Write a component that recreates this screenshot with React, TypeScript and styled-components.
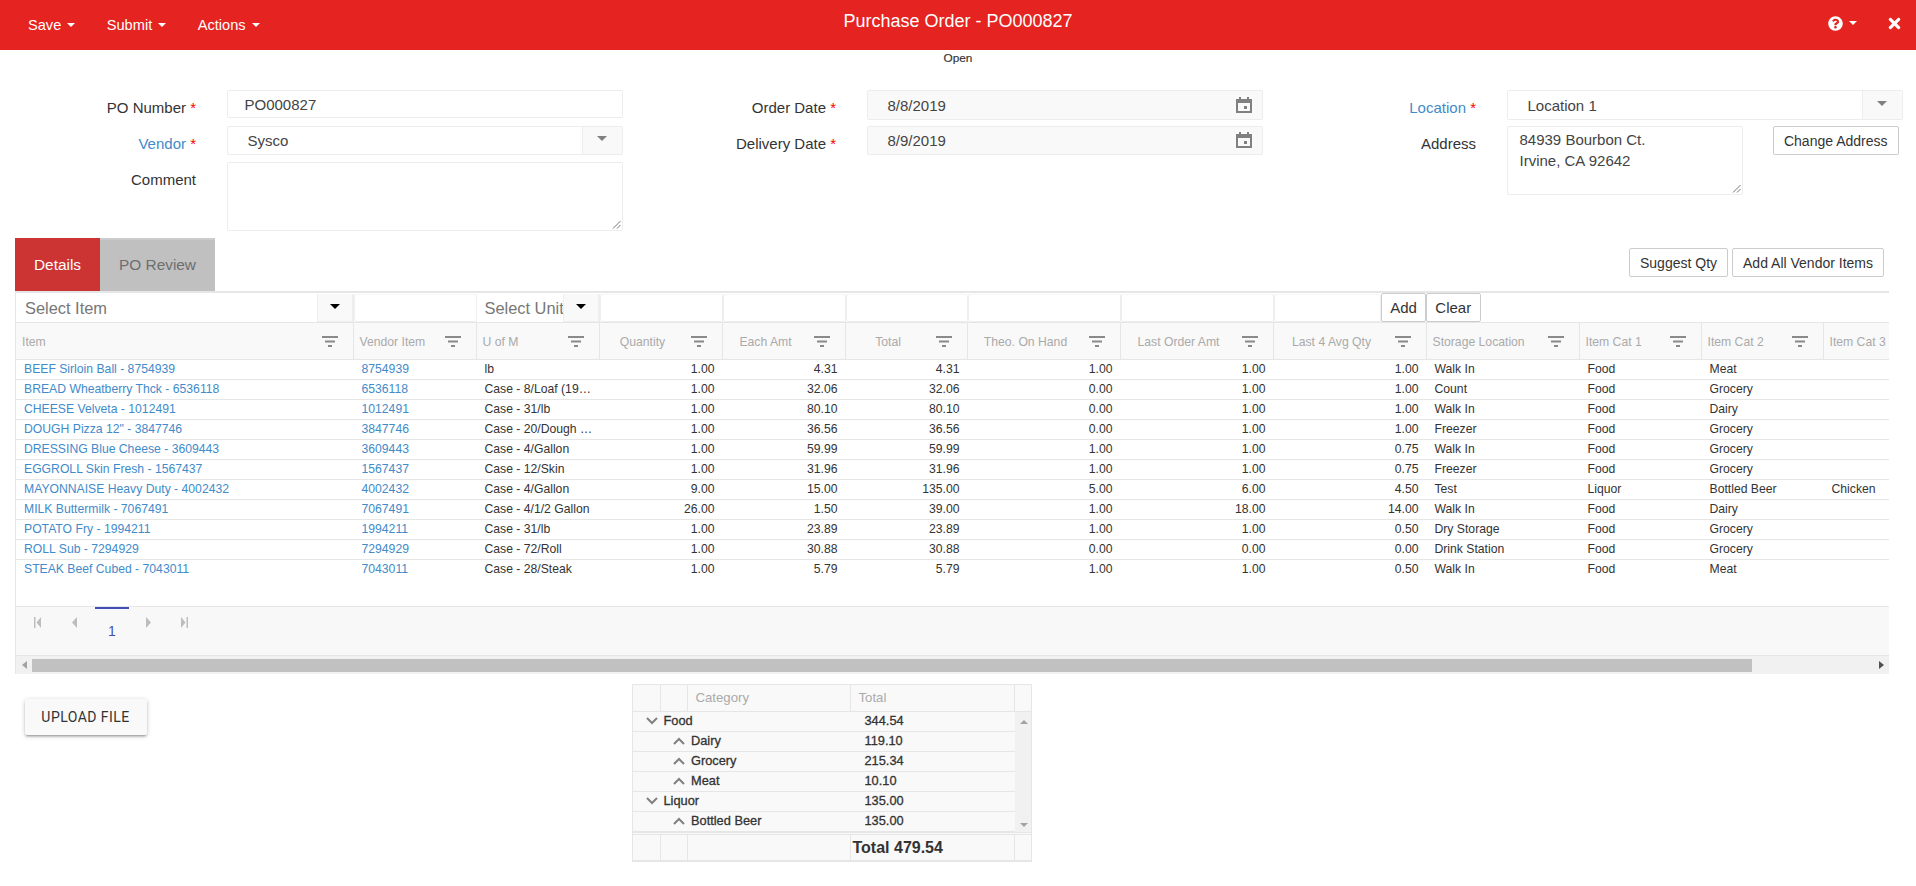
import React from "react";
import styled, { createGlobalStyle } from "styled-components";
import { FaQuestionCircle, FaTimes } from "react-icons/fa";

const Global = createGlobalStyle`
  html, body { margin: 0; padding: 0; background: #fff; overflow: hidden; }
  * { box-sizing: border-box; }
  body { font-family: "Liberation Sans", Arial, sans-serif; color: #333; }
`;

const Page = styled.div`
  width: 1916px;
  height: 886px;
  overflow: hidden;
`;

const TopBar = styled.header`
  height: 50px;
  background: #e52320;
  color: #fff;
  display: grid;
  grid-template-columns: 1fr auto 1fr;
  align-items: center;
  padding: 0 16px;
`;
const TopLeft = styled.nav`
  display: flex;
  gap: 31.5px;
  font-size: 14.6px;
  margin-left: 12px;
`;
const TopItem = styled.span`
  display: inline-flex;
  align-items: center;
  gap: 6px;
`;
const Caret = styled.i<{ $color?: string; $size?: number }>`
  display: inline-block;
  width: 0;
  height: 0;
  border-style: solid;
  border-color: ${(p) => p.$color || "#fff"} transparent transparent;
  border-width: ${(p) => p.$size || 4}px ${(p) => p.$size || 4}px 0;
`;
const Title = styled.h1`
  margin: 0 0 7px;
  font-size: 18px;
  font-weight: 400;
  text-align: center;
`;
const TopRight = styled.div`
  display: flex;
  justify-content: flex-end;
  align-items: center;
  padding-bottom: 4px;
  margin-right: -3px;
`;
const HelpGroup = styled.span`
  display: inline-flex;
  align-items: center;
  gap: 6px;
  margin-right: 29px;
`;
const Status = styled.div`
  height: 16px;
  line-height: 16px;
  text-align: center;
  font-size: 11.8px;
  -webkit-text-stroke: 0.15px #333;
`;

const FormArea = styled.section`
  display: grid;
  grid-template-columns: 640px 640px 636px;
  padding-top: 24px;
  height: 172px;
`;
const FormCol = styled.div`
  display: grid;
  grid-template-columns: 196px 396px;
  column-gap: 30.5px;
  grid-auto-rows: min-content;
`;
const Label = styled.label<{ $link?: boolean }>`
  text-align: right;
  font-size: 15px;
  line-height: 20px;
  padding-top: 8px;
  height: 36px;
  color: ${(p) => (p.$link ? "#428bca" : "#333")};
`;
const Req = styled.span`
  color: #f00;
`;
const Field = styled.div<{ $grey?: boolean; $h?: number }>`
  height: ${(p) => p.$h || 29}px;
  border: 1px solid #ededed;
  border-radius: 2px;
  background: ${(p) => (p.$grey ? "#f9f9f9" : "#fff")};
  display: flex;
  align-items: center;
  font-size: 15px;
  color: #444;
  position: relative;
`;
const FieldText = styled.span<{ $pad: number }>`
  flex: 1;
  padding-left: ${(p) => p.$pad}px;
`;
const ArrowBox = styled.span`
  width: 40px;
  align-self: stretch;
  background: #f9f9f9;
  border-left: 1px solid #ededed;
  display: flex;
  align-items: center;
  justify-content: center;
  padding-bottom: 4px;
`;
const FieldIcon = styled.svg`
  width: 16px;
  height: 16px;
  margin-right: 10px;
  margin-bottom: 1px;
`;
const Grip = styled.svg`
  position: absolute;
  right: 1px;
  bottom: 1px;
  width: 9px;
  height: 9px;
`;
const AddressRow = styled.div`
  display: flex;
  justify-content: space-between;
  align-items: flex-start;
  padding-right: 4px;
`;
const AddressBox = styled.div`
  width: 236.5px;
  height: 69px;
  border: 1px solid #ededed;
  border-radius: 2px;
  padding: 2px 12px;
  font-size: 15px;
  line-height: 21px;
  color: #444;
  position: relative;
`;
const Btn = styled.button`
  height: 29px;
  padding: 0 10px;
  background: #fff;
  border: 1px solid #ccc;
  border-radius: 2px;
  font: 14px "Liberation Sans", Arial, sans-serif;
  color: #333;
  white-space: nowrap;
`;

const TabBar = styled.div`
  margin: 0 27px 0 15px;
  display: flex;
  justify-content: space-between;
  height: 53px;
`;
const Tabs = styled.div`
  display: flex;
`;
const Tab = styled.div<{ $active?: boolean }>`
  height: 53px;
  line-height: 54px;
  text-align: center;
  font-size: 15.4px;
  width: ${(p) => (p.$active ? 85 : 115)}px;
  background: ${(p) => (p.$active ? "#cc3333" : "#c0c0c0")};
  color: ${(p) => (p.$active ? "#fff" : "#6e6e6e")};
  ${(p) => (p.$active ? "" : "border-top: 2px solid #ccc; line-height: 50px;")}
`;
const TabActions = styled.div`
  display: flex;
  gap: 4px;
  padding: 10px 5px 0 0;
`;

const Grid = styled.div`
  margin: 0 27px 0 15px;
  width: 1874px;
  overflow: hidden;
  border-top: 2px solid #e6e6e6;
  border-left: 1px solid #e6e6e6;
`;
const COLS = "337.5px 123px 123px 123px 123px 122px 153px 153px 153px 153px 122px 122px 122px";
const EntryRow = styled.div`
  height: 29px;
  display: flex;
  width: 1900px;
`;
const EntrySelect = styled.div<{ $w: number; $big?: boolean }>`
  width: ${(p) => p.$w}px;
  height: 28px;
  margin-top: 1px;
  display: flex;
  align-items: center;
  border-right: 1px solid #eee;
  font-size: 16.4px;
  color: #777;
  padding-left: ${(p) => (p.$big ? 9 : 8)}px;
  position: relative;
`;
const EntryArrow = styled.span`
  position: absolute;
  right: 0;
  top: 0;
  bottom: 0;
  width: 36px;
  background: #f9f9f9;
  border: 1px solid #eee;
  border-top: 0;
  display: flex;
  align-items: center;
  justify-content: center;
  padding-bottom: 3px;
`;
const EntryCell = styled.div<{ $w: number }>`
  width: ${(p) => p.$w}px;
  height: 28px;
  margin-top: 1px;
  border: 1px solid #eee;
  border-top-color: #f6f6f6;
  border-radius: 2px;
`;
const EntryBtn = styled(Btn)<{ $w: number }>`
  width: ${(p) => p.$w}px;
  padding: 0;
  font-size: 15px;
`;

const HeadRow = styled.div`
  display: grid;
  grid-template-columns: ${COLS};
  height: 38px;
  background: #f9f9f9;
  border-top: 1px solid #e6e6e6;
  border-bottom: 1px solid #e6e6e6;
  width: 1900px;
`;
const HeadCell = styled.div<{ $center?: boolean }>`
  border-right: 1px solid #e6e6e6;
  font-size: 12.2px;
  color: #aaa;
  position: relative;
  line-height: 36px;
  white-space: nowrap;
  padding-top: 1px;
  ${(p) =>
    p.$center
      ? "text-align: center; padding-right: 36px;"
      : "padding-left: 6px;"}
`;
const FilterIcon = styled.svg`
  position: absolute;
  right: 15px;
  top: 13px;
  width: 16px;
  height: 11px;
`;
const Row = styled.div`
  display: grid;
  grid-template-columns: ${COLS};
  height: 20px;
  border-bottom: 1px solid #e6e6e6;
  width: 1900px;
  &:last-child { border-bottom: 0; }
`;
const Cell = styled.div<{ $num?: boolean; $link?: boolean }>`
  font-size: 12.2px;
  line-height: 19px;
  padding: ${(p) => (p.$num ? "0 8px" : "0 5px 0 8px")};
  overflow: hidden;
  white-space: nowrap;
  text-overflow: ellipsis;
  text-align: ${(p) => (p.$num ? "right" : "left")};
  color: ${(p) => (p.$link ? "#428bca" : "#333")};
`;
const Body = styled.div`
  height: 246px;
`;
const Pager = styled.div`
  height: 50px;
  background: #f8f8f8;
  border-top: 1px solid #e6e6e6;
  border-bottom: 1px solid #e6e6e6;
  display: flex;
  align-items: flex-start;
  padding-left: 18px;
`;
const PagerBtn = styled.svg<{ $gap: number }>`
  width: 7px;
  height: 11px;
  margin-top: 10px;
  margin-right: ${(p) => p.$gap}px;
`;
const PageTab = styled.div`
  width: 34px;
  height: 40px;
  border-top: 2px solid #3f51b5;
  text-align: center;
  font-size: 14px;
  line-height: 44px;
  color: #3f51b5;
  margin-right: 16px;
`;
const HScroll = styled.div`
  height: 18px;
  background: #f1f1f1;
  display: flex;
  align-items: center;
  padding-left: 16px;
  position: relative;
`;
const HThumb = styled.div`
  width: 1720px;
  height: 13px;
  background: #c1c1c1;
`;
const ScrollArrow = styled.i<{ $dir: "left" | "right"; $color: string }>`
  position: absolute;
  top: 5px;
  ${(p) => (p.$dir === "left" ? "left: 6px;" : "right: 5px;")}
  border-top: 4px solid transparent;
  border-bottom: 4px solid transparent;
  ${(p) =>
    p.$dir === "left"
      ? `border-right: 5px solid ${p.$color};`
      : `border-left: 5px solid ${p.$color};`}
`;

const Bottom = styled.section`
  display: flex;
  align-items: flex-start;
  padding-left: 24.5px;
`;
const Upload = styled.button`
  width: 122px;
  height: 36px;
  margin-top: 25px;
  border: 0;
  border-radius: 2px;
  background: #f9f9f9;
  font: 14px Roboto, "Liberation Sans", sans-serif;
  letter-spacing: 0.45px;
  color: #333;
  box-shadow: 0 1px 5px rgba(0, 0, 0, .2), 0 2px 2px rgba(0, 0, 0, .14), 0 3px 1px -2px rgba(0, 0, 0, .12);
`;
const Summary = styled.div`
  width: 400px;
  margin: 10px 0 0 485.5px;
  background: #f9f9f9;
  border: 1px solid #e6e6e6;
  border-bottom-width: 2px;
`;
const SUM_COLS = "27.5px 27px 163px 164px 1fr";
const SumHead = styled.div`
  display: grid;
  grid-template-columns: ${SUM_COLS};
  height: 27px;
  border-bottom: 1px solid #e6e6e6;
`;
const SumHeadCell = styled.div`
  border-right: 1px solid #e6e6e6;
  font-size: 13.2px;
  color: #aaa;
  line-height: 26px;
  padding-left: 8px;
  &:last-child { border-right: 0; }
`;
const SumMiddle = styled.div`
  display: flex;
  height: 121px;
  border-bottom: 1px solid #e6e6e6;
`;
const SumRows = styled.div`
  width: 381.5px;
`;
const SumRow = styled.div`
  display: grid;
  grid-template-columns: 217.5px 1fr;
  height: 20px;
  border-bottom: 1px solid #e6e6e6;
  font-size: 12.8px;
  line-height: 17px;
  -webkit-text-stroke: 0.3px #333;
  color: #333;
`;
const SumName = styled.div<{ $level: number }>`
  display: flex;
  align-items: center;
  height: 17px;
  padding-left: ${(p) => (p.$level ? 40 : 12.5)}px;
  gap: 6px;
`;
const Chevron = styled.svg`
  width: 12px;
  height: 8px;
  flex: none;
`;
const SumValue = styled.div`
  padding-left: 14px;
`;
const VScroll = styled.div`
  flex: 1;
  background: #f1f1f1;
  position: relative;
`;
const VArrow = styled.i<{ $up?: boolean }>`
  position: absolute;
  left: 5px;
  ${(p) => (p.$up ? "top: 8px;" : "bottom: 5px;")}
  border-left: 4px solid transparent;
  border-right: 4px solid transparent;
  ${(p) => (p.$up ? "border-bottom: 4px solid #a3a3a3;" : "border-top: 4px solid #a3a3a3;")}
`;
const SumFoot = styled.div`
  display: grid;
  grid-template-columns: ${SUM_COLS};
  height: 26px;
  border-top: 1px solid #e6e6e6;
  margin-top: 1px;
`;
const SumFootCell = styled.div`
  border-right: 1px solid #e6e6e6;
  font-size: 16px;
  font-weight: 700;
  line-height: 25px;
  padding-left: 2px;
  white-space: nowrap;
  color: #333;
  &:last-child { border-right: 0; }
`;

const rows: string[][] = [
  ["BEEF Sirloin Ball - 8754939", "8754939", "lb", "1.00", "4.31", "4.31", "1.00", "1.00", "1.00", "Walk In", "Food", "Meat", ""],
  ["BREAD Wheatberry Thck - 6536118", "6536118", "Case - 8/Loaf (19oz)", "1.00", "32.06", "32.06", "0.00", "1.00", "1.00", "Count", "Food", "Grocery", ""],
  ["CHEESE Velveta - 1012491", "1012491", "Case - 31/lb", "1.00", "80.10", "80.10", "0.00", "1.00", "1.00", "Walk In", "Food", "Dairy", ""],
  ["DOUGH Pizza 12\" - 3847746", "3847746", "Case - 20/Dough Ball", "1.00", "36.56", "36.56", "0.00", "1.00", "1.00", "Freezer", "Food", "Grocery", ""],
  ["DRESSING Blue Cheese - 3609443", "3609443", "Case - 4/Gallon", "1.00", "59.99", "59.99", "1.00", "1.00", "0.75", "Walk In", "Food", "Grocery", ""],
  ["EGGROLL Skin Fresh - 1567437", "1567437", "Case - 12/Skin", "1.00", "31.96", "31.96", "1.00", "1.00", "0.75", "Freezer", "Food", "Grocery", ""],
  ["MAYONNAISE Heavy Duty - 4002432", "4002432", "Case - 4/Gallon", "9.00", "15.00", "135.00", "5.00", "6.00", "4.50", "Test", "Liquor", "Bottled Beer", "Chicken"],
  ["MILK Buttermilk - 7067491", "7067491", "Case - 4/1/2 Gallon", "26.00", "1.50", "39.00", "1.00", "18.00", "14.00", "Walk In", "Food", "Dairy", ""],
  ["POTATO Fry - 1994211", "1994211", "Case - 31/lb", "1.00", "23.89", "23.89", "1.00", "1.00", "0.50", "Dry Storage", "Food", "Grocery", ""],
  ["ROLL Sub - 7294929", "7294929", "Case - 72/Roll", "1.00", "30.88", "30.88", "0.00", "0.00", "0.00", "Drink Station", "Food", "Grocery", ""],
  ["STEAK Beef Cubed - 7043011", "7043011", "Case - 28/Steak", "1.00", "5.79", "5.79", "1.00", "1.00", "0.50", "Walk In", "Food", "Meat", ""],
];

const heads: [string, boolean][] = [
  ["Item", false], ["Vendor Item", false], ["U of M", false], ["Quantity", true], ["Each Amt", true], ["Total", true],
  ["Theo. On Hand", true], ["Last Order Amt", true], ["Last 4 Avg Qty", true], ["Storage Location", false],
  ["Item Cat 1", false], ["Item Cat 2", false], ["Item Cat 3", false],
];

const summary: [number, string, string][] = [
  [0, "Food", "344.54"], [1, "Dairy", "119.10"], [1, "Grocery", "215.34"], [1, "Meat", "10.10"],
  [0, "Liquor", "135.00"], [1, "Bottled Beer", "135.00"],
];

const Filter = () => (
  <FilterIcon viewBox="0 0 16 11" aria-hidden>
    <path d="M0 0h16v2H0zM3 4.5h10v2H3zM6 9h4v2H6z" fill="#8a8a8a" />
  </FilterIcon>
);
const Calendar = () => (
  <FieldIcon viewBox="0 0 16 16" aria-hidden>
    <path fillRule="evenodd" fill="#808080" d="M3 0h2v2h6V0h2v2h3v14H0V2h3zM2 6v8h12V6z" />
    <path fill="#808080" d="M8 9h3v3H8z" />
  </FieldIcon>
);
const ResizeGrip = () => (
  <Grip viewBox="0 0 9 9" aria-hidden>
    <path d="M1 8.5 8.5 1M5 8.5 8.5 5" stroke="#777" strokeWidth="1" fill="none" />
  </Grip>
);

export default function App() {
  return (
    <Page>
      <Global />
      <TopBar>
        <TopLeft>
          <TopItem>Save <Caret /></TopItem>
          <TopItem>Submit <Caret /></TopItem>
          <TopItem>Actions <Caret /></TopItem>
        </TopLeft>
        <Title>Purchase Order - PO000827</Title>
        <TopRight>
          <HelpGroup><FaQuestionCircle size={15} /><Caret /></HelpGroup>
          <FaTimes size={17} />
        </TopRight>
      </TopBar>
      <Status>Open</Status>
      <FormArea>
        <FormCol>
          <Label>PO Number <Req>*</Req></Label>
          <Field $h={28}><FieldText $pad={17}>PO000827</FieldText></Field>
          <Label $link>Vendor <Req>*</Req></Label>
          <Field><FieldText $pad={20}>Sysco</FieldText><ArrowBox><Caret $color="#808080" $size={5} /></ArrowBox></Field>
          <Label>Comment</Label>
          <Field $h={69}><ResizeGrip /></Field>
        </FormCol>
        <FormCol>
          <Label>Order Date <Req>*</Req></Label>
          <Field $grey $h={30}><FieldText $pad={20}>8/8/2019</FieldText><Calendar /></Field>
          <Label>Delivery Date <Req>*</Req></Label>
          <Field $grey><FieldText $pad={20}>8/9/2019</FieldText><Calendar /></Field>
        </FormCol>
        <FormCol>
          <Label $link>Location <Req>*</Req></Label>
          <Field $h={30}><FieldText $pad={20}>Location 1</FieldText><ArrowBox><Caret $color="#808080" $size={5} /></ArrowBox></Field>
          <Label>Address</Label>
          <AddressRow>
            <AddressBox>84939 Bourbon Ct.<br />Irvine, CA 92642<ResizeGrip /></AddressBox>
            <Btn>Change Address</Btn>
          </AddressRow>
        </FormCol>
      </FormArea>
      <TabBar>
        <Tabs>
          <Tab $active>Details</Tab>
          <Tab>PO Review</Tab>
        </Tabs>
        <TabActions>
          <Btn>Suggest Qty</Btn>
          <Btn>Add All Vendor Items</Btn>
        </TabActions>
      </TabBar>
      <Grid>
        <EntryRow>
          <EntrySelect $w={337.5} $big>Select Item<EntryArrow><Caret $color="#000" $size={5} /></EntryArrow></EntrySelect>
          <EntryCell $w={123} />
          <EntrySelect $w={123}>Select Unit<EntryArrow><Caret $color="#000" $size={5} /></EntryArrow></EntrySelect>
          <EntryCell $w={123} />
          <EntryCell $w={123} />
          <EntryCell $w={122} />
          <EntryCell $w={153} />
          <EntryCell $w={153} />
          <EntryCell $w={107.5} />
          <EntryBtn $w={45}>Add</EntryBtn>
          <EntryBtn $w={54.5}>Clear</EntryBtn>
        </EntryRow>
        <HeadRow>
          {heads.map(([h, c], i) => (
            <HeadCell key={h} $center={c}>
              {h}
              {i < 12 && <Filter />}
            </HeadCell>
          ))}
        </HeadRow>
        <Body>
          {rows.map((r) => (
            <Row key={r[0]}>
              {r.map((v, i) => (
                <Cell key={i} $link={i < 2} $num={i >= 3 && i <= 8}>{v}</Cell>
              ))}
            </Row>
          ))}
        </Body>
        <Pager>
          <PagerBtn $gap={30} viewBox="0 0 7 11" aria-hidden><path d="M0 0h1.5v11H0zM7 0v11L2.5 5.5z" fill="#bdbdbd" /></PagerBtn>
          <PagerBtn $gap={17} viewBox="0 0 7 11" aria-hidden><path d="M6 0v11L1 5.5z" fill="#bdbdbd" /></PagerBtn>
          <PageTab>1</PageTab>
          <PagerBtn $gap={29} viewBox="0 0 7 11" aria-hidden><path d="M1 0v11l5-5.5z" fill="#bdbdbd" /></PagerBtn>
          <PagerBtn $gap={0} viewBox="0 0 7 11" aria-hidden><path d="M0 0v11l4.5-5.5zM5.5 0H7v11H5.5z" fill="#bdbdbd" /></PagerBtn>
        </Pager>
        <HScroll>
          <ScrollArrow $dir="left" $color="#a3a3a3" />
          <HThumb />
          <ScrollArrow $dir="right" $color="#505050" />
        </HScroll>
      </Grid>
      <Bottom>
        <Upload>UPLOAD FILE</Upload>
        <Summary>
          <SumHead>
            <SumHeadCell /><SumHeadCell />
            <SumHeadCell>Category</SumHeadCell>
            <SumHeadCell>Total</SumHeadCell>
            <SumHeadCell />
          </SumHead>
          <SumMiddle>
            <SumRows>
              {summary.map(([lvl, name, val]) => (
                <SumRow key={name}>
                  <SumName $level={lvl}>
                    <Chevron viewBox="0 0 12 8" aria-hidden>
                      <path d={lvl ? "M1 7l5-5 5 5" : "M1 1l5 5 5-5"} stroke="#808080" strokeWidth="2" fill="none" />
                    </Chevron>
                    {name}
                  </SumName>
                  <SumValue>{val}</SumValue>
                </SumRow>
              ))}
            </SumRows>
            <VScroll><VArrow $up /><VArrow /></VScroll>
          </SumMiddle>
          <SumFoot>
            <SumFootCell /><SumFootCell /><SumFootCell />
            <SumFootCell>Total 479.54</SumFootCell>
            <SumFootCell />
          </SumFoot>
        </Summary>
      </Bottom>
    </Page>
  );
}
